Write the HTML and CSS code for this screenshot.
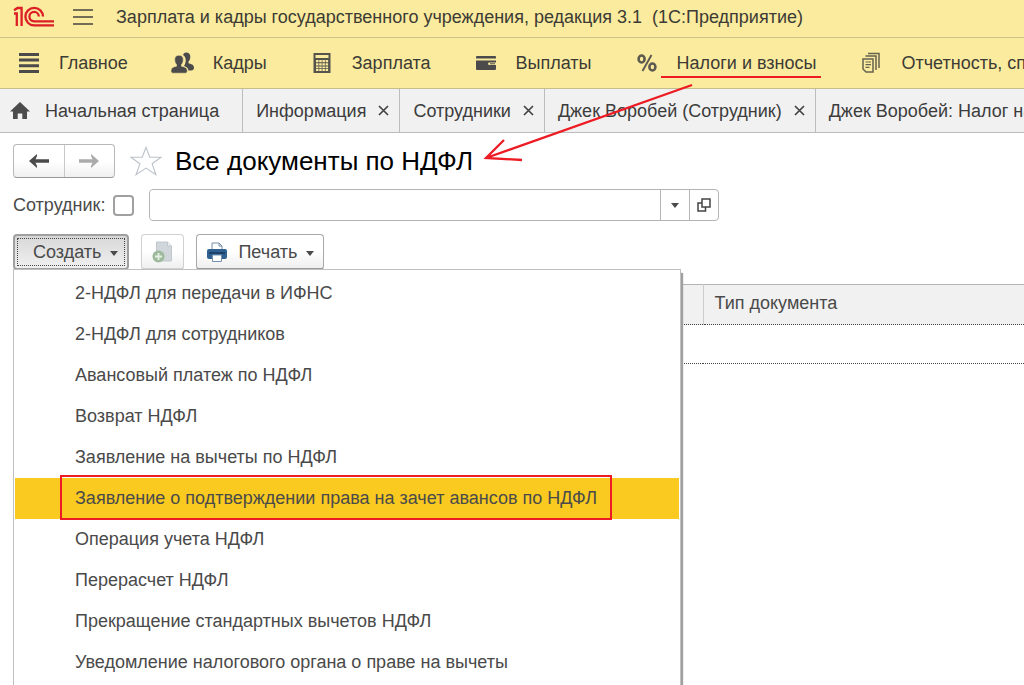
FILE: index.html
```html
<!DOCTYPE html>
<html lang="ru">
<head>
  <meta charset="UTF-8">
  <meta name="viewport" content="width=device-width, initial-scale=1.0">
  <title>Все документы по НДФЛ</title>
  <link rel="stylesheet" href="styles.css">
</head>
<body>
  <header class="titlebar">
    <svg class="logo" width="42" height="22" viewBox="0 0 42 22" fill="none" stroke="#dc1f26" stroke-width="2.300">
      <path d="M1 7.500h2.800V20M1 4.300L4.500 2H8.600v18"/>
      <path d="M30 10.500A8.800 8.800 0 1 0 21 19.400H41"/>
      <path d="M25.800 10.500A4.700 4.700 0 1 0 21 15.300H41"/>
    </svg>
    <button class="burger" aria-label="Меню">
      <svg width="20" height="16" viewBox="0 0 20 16" stroke="#45443c" stroke-width="1.500"><path d="M0 1h20M0 8h20M0 15h20"/></svg>
    </button>
    <span class="app-name">Зарплата и кадры государственного учреждения, редакция 3.1&nbsp; (1С:Предприятие)</span>
  </header>

  <nav class="sections">
    <a href="#">
      <svg width="20" height="20" viewBox="0 0 20 20" fill="#4b4b4b"><path d="M0 0h20v3H0zM0 5.600h20v3H0zM0 11.300h20v3H0zM0 17h20v3H0z"/></svg>
      Главное
    </a>
    <a href="#">
      <svg class="wide" width="24" height="22" viewBox="0 0 24 22" fill="#4b4b4b">
        <path d="M15 0.500c3 0 4.500 1.800 4.300 4.800-.1 1.800-.8 3.200-1.800 4.200v1.800c3.500.8 5.500 2 5.500 4.200 0 2-1 3-3 3h-2.500c-.5-2.500-2-3.700-4.500-4.500 1.300-2 1.900-4.200 1.700-6.500-.2-2-1.200-3.500-2.700-4.400.6-1.600 1.500-2.600 3-2.600z"/>
        <path d="M8 3.200c3 0 4.500 1.900 4.300 4.700-.1 2-.8 3.600-1.800 4.600v1.700c3.500.8 5.800 1.500 5.800 4.500 0 1.500-.5 2.500-2 2.500H2c-1.500 0-2-1-2-2.500 0-3 2-3.700 5.500-4.500v-1.700c-1-1-1.700-2.600-1.800-4.600C3.500 5.100 5 3.200 8 3.200z" stroke="#fbeb9e" stroke-width=".6"/>
      </svg>
      Кадры
    </a>
    <a href="#">
      <svg width="20" height="22" viewBox="0 0 20 22">
        <path fill="#55534d" d="M1.500 1h17v20h-17z"/>
        <path fill="#fbeb9e" d="M3.500 3h13v3h-13zM4 8h2.500v2.300H4zM7.200 8h2.500v2.300H7.200zM10.400 8h2.500v2.300h-2.500zM13.600 8h2.500v2.300h-2.500zM4 11.200h2.500v2.300H4zM7.200 11.200h2.500v2.300H7.200zM10.400 11.200h2.500v2.300h-2.500zM13.600 11.200h2.500v2.300h-2.500zM4 14.400h2.500v1.800H4zM7.200 14.400h2.500v1.800H7.200zM10.400 14.400h2.500v1.800h-2.500zM13.600 14.400h2.500v1.800h-2.500zM4 17h2.500v2H4zM7.200 17h2.500v2H7.200zM10.400 17h2.500v2h-2.500zM13.600 17h2.500v2h-2.500z"/>
      </svg>
      Зарплата
    </a>
    <a href="#">
      <svg width="20" height="16" viewBox="0 0 20 16" fill="#4b4b4b">
        <path d="M1 1h18q1 0 1 1v1.500H0V2q0-1 1-1z"/>
        <path d="M0 5.500h20v2h-6.500q-1.500 0-1.500 1.200 0 1.300 1.500 1.300H20v4q0 1-1 1H1q-1 0-1-1z"/>
        <path d="M14 8.300h5v1h-5z"/>
      </svg>
      Выплаты
    </a>
    <a href="#">
      <svg width="20" height="18" viewBox="0 0 20 18" fill="none" stroke="#5d5b50" stroke-width="2.600">
        <ellipse cx="4.600" cy="5" rx="3" ry="3.500"/><ellipse cx="15.400" cy="13" rx="3" ry="3.500"/><path d="M14.500 1L5.500 17" stroke-width="2"/>
      </svg>
      <span class="marked">Налоги и взносы</span>
    </a>
    <a href="#">
      <svg width="20" height="22" viewBox="0 0 20 22" fill="none" stroke="#66634f" stroke-width="1.500">
        <path d="M2 7h10v13H5l-3-3zM4.500 4H15v14M7 1.500h11V16"/>
        <path d="M4.500 10h5.500M4.500 12.700h5.500M4.500 15.300h4" stroke-width="1.200"/>
      </svg>
      Отчетность, справки
    </a>
  </nav>

  <nav class="tabs">
    <a class="tab home" href="#">
      <svg width="20" height="18" viewBox="0 0 20 18" fill="#4b4b4b"><path d="M10 0l10 9.500h-3V17h-4.700v-5.500H7.700V17H3V9.500H0z"/></svg>
      Начальная страница
    </a>
    <div class="tab"><a href="#">Информация</a><button class="close" aria-label="Закрыть"><svg width="11" height="11" viewBox="0 0 11 11" stroke="#444" stroke-width="1.700"><path d="M1 1l9 9M10 1l-9 9"/></svg></button></div>
    <div class="tab"><a href="#">Сотрудники</a><button class="close" aria-label="Закрыть"><svg width="11" height="11" viewBox="0 0 11 11" stroke="#444" stroke-width="1.700"><path d="M1 1l9 9M10 1l-9 9"/></svg></button></div>
    <div class="tab"><a href="#">Джек Воробей (Сотрудник)</a><button class="close" aria-label="Закрыть"><svg width="11" height="11" viewBox="0 0 11 11" stroke="#444" stroke-width="1.700"><path d="M1 1l9 9M10 1l-9 9"/></svg></button></div>
    <div class="tab"><a href="#">Джек Воробей: Налог на доходы</a></div>
  </nav>

  <main class="page">
    <div class="heading">
      <div class="history">
        <button aria-label="Назад"><svg width="20" height="14" viewBox="0 0 20 14" fill="#4b4b4b"><path d="M0 7l8-7v2L6.500 5.300H20v3.400H6.500L8 12v2z"/></svg></button>
        <button aria-label="Вперед" disabled><svg width="20" height="14" viewBox="0 0 20 14" fill="#ababab"><path d="M20 7l-8-7v2l1.500 3.300H0v3.400h13.500L12 12v2z"/></svg></button>
      </div>
      <button class="star" aria-label="В избранное">
        <svg width="32" height="32" viewBox="0 0 34 32" fill="#fff" stroke="#bcc1c9" stroke-width="1.200"><path d="M17 1.500l4 10.500h12l-9.500 7 4 11.500L17 23.500 6.500 30.500l4-11.500L1 12h12z"/></svg>
      </button>
      <h1>Все документы по НДФЛ</h1>
    </div>

    <div class="filter">
      <label for="use-employee">Сотрудник:</label>
      <input type="checkbox" id="use-employee">
      <div class="field">
        <input type="text" aria-label="Сотрудник">
        <button aria-label="Выбрать из списка"><span class="caret"></span></button>
        <button aria-label="Открыть"><svg width="14" height="14" viewBox="0 0 14 14" fill="none" stroke="#444" stroke-width="1.500"><path d="M5 1h8v8H5zM5 5H1v8h7.500V9"/></svg></button>
      </div>
    </div>

    <div class="toolbar">
      <div class="dropdown">
        <button class="btn create">Создать<span class="caret"></span></button>
        <ul class="menu">
          <li><a href="#">2-НДФЛ для передачи в ИФНС</a></li>
          <li><a href="#">2-НДФЛ для сотрудников</a></li>
          <li><a href="#">Авансовый платеж по НДФЛ</a></li>
          <li><a href="#">Возврат НДФЛ</a></li>
          <li><a href="#">Заявление на вычеты по НДФЛ</a></li>
          <li class="selected"><a href="#"><span class="framed">Заявление о подтверждении права на зачет авансов по НДФЛ</span></a></li>
          <li><a href="#">Операция учета НДФЛ</a></li>
          <li><a href="#">Перерасчет НДФЛ</a></li>
          <li><a href="#">Прекращение стандартных вычетов НДФЛ</a></li>
          <li><a href="#">Уведомление налогового органа о праве на вычеты</a></li>
        </ul>
      </div>
      <button class="btn copy" aria-label="Скопировать" disabled>
        <svg width="22" height="22" viewBox="0 0 22 22">
          <path d="M4.500 1h11l4 4v15h-15z" fill="#d0d6da" stroke="#c0c8cd"/><path d="M15.500 1v4h4" fill="#eef1f2" stroke="#c0c8cd"/>
          <circle cx="6.500" cy="15.500" r="6" fill="#9dbb9c"/><path d="M6.500 12v7M3 15.500h7" stroke="#e6f0e5" stroke-width="1.800"/>
        </svg>
      </button>
      <button class="btn print">
        <svg width="20" height="20" viewBox="0 0 20 20">
          <path d="M5 9V1h7l3 3v5" fill="#fff" stroke="#7590aa"/><path d="M12 1v3h3" fill="none" stroke="#7590aa"/>
          <rect x="0" y="7" width="20" height="10" rx="2" fill="#2f608f"/><path d="M2 11h16" stroke="#16395e" stroke-width="1.500"/>
          <path d="M5.500 13h9v6.500h-9z" fill="#fff" stroke="#7590aa"/>
        </svg>
        Печать<span class="caret"></span>
      </button>
    </div>

    <table class="list">
      <thead>
        <tr><th class="first"></th><th>Тип документа</th></tr>
      </thead>
      <tbody>
        <tr><td></td><td></td></tr>
      </tbody>
    </table>
  </main>

  <svg class="arrow" width="212" height="84" viewBox="0 0 212 84" fill="none" stroke="#ed1c24" stroke-width="2.300">
    <path d="M210 4L4 77M22 59L4 77L40 79"/>
  </svg>
</body>
</html>
```

FILE: styles.css
```css
* {
  box-sizing: border-box;
}
html {
  overflow: hidden;
}
body {
  margin: 0;
  min-height: 100vh;
  position: relative;
  overflow: hidden;
  background: #fff;
  color: #4a4a4a;
  font-family: "Liberation Sans", Arial, sans-serif;
  font-size: 18px;
  line-height: 22px;
}
a {
  color: inherit;
  text-decoration: none;
}
button, input {
  font: inherit;
  color: inherit;
  margin: 0;
}
button {
  padding: 0;
  border: none;
  background: none;
}
svg {
  flex: none;
}

.titlebar {
  display: flex;
  align-items: center;
  height: 38px;
  padding: 0 13px 3px;
  background: #fbeb9e;
  border-bottom: 1px solid #cdc288;
  color: #3c3b35;
  white-space: nowrap;
}
.burger {
  display: flex;
  margin: 0 23px 0 18px;
}

.sections {
  display: flex;
  gap: 45px;
  height: 51px;
  padding-left: 19px;
  overflow: hidden;
  background: #fbeb9e;
  border-bottom: 1px solid #c6bd8e;
  color: #3c3b35;
  white-space: nowrap;
}
.sections a {
  display: flex;
  flex: none;
  align-items: center;
  gap: 20px;
}
.sections .wide {
  margin: 0 -2px;
}
.marked {
  position: relative;
}
.marked::after {
  content: "";
  position: absolute;
  left: -16px;
  right: -5px;
  bottom: -4px;
  height: 2px;
  background: #ed1c24;
}

.tabs {
  display: flex;
  height: 44px;
  overflow: hidden;
  background: #f1f1f1;
  border-bottom: 1px solid #bcbcbc;
  color: #3c3c3c;
  white-space: nowrap;
}
.tab {
  display: flex;
  flex: none;
  align-items: center;
  gap: 12px;
  padding: 0 10px 0 13px;
  border-left: 1px solid #bcbcbc;
}
.tab.home {
  gap: 15px;
  padding: 0 23px 0 10px;
  border-left: none;
}
.close {
  display: flex;
}

.page {
  padding: 11px 0 0 13px;
}
.heading {
  display: flex;
  align-items: center;
}
.history {
  display: flex;
  width: 102px;
  height: 34px;
  border: 1px solid #b8b8b8;
  border-bottom-color: #999;
  border-radius: 4px;
  background: linear-gradient(#fff 50%, #f0f0f0);
}
.history button {
  display: flex;
  flex: 1;
  align-items: center;
  justify-content: center;
}
.history button + button {
  border-left: 1px solid #c8c8c8;
}
.star {
  display: flex;
  margin: 0 13px 0 15px;
}
h1 {
  margin: 0;
  color: #000;
  font-size: 26px;
  font-weight: normal;
  line-height: 34px;
}

.filter {
  display: flex;
  align-items: center;
  margin-top: 11px;
}
.filter input[type="checkbox"] {
  appearance: none;
  width: 21px;
  height: 21px;
  margin: 0 15px 0 8px;
  border: 2px solid #a0a0a0;
  border-radius: 4px;
  background: #fff;
}
.field {
  display: flex;
  width: 57%;
  max-width: 570px;
  height: 32px;
  border: 1px solid #b4b4b4;
  border-radius: 4px;
}
.field input {
  flex: 1;
  min-width: 0;
  padding: 0 8px;
  border: none;
  border-radius: 4px;
  outline: none;
}
.field button {
  display: flex;
  align-items: center;
  justify-content: center;
  width: 29px;
  border-left: 1px solid #b4b4b4;
}
.caret {
  border: 4px solid transparent;
  border-top: 5px solid #4a4a4a;
  border-bottom: none;
}

.toolbar {
  display: flex;
  gap: 12px;
  margin-top: 13px;
}
.btn {
  display: flex;
  align-items: center;
  height: 36px;
  border: 1px solid #a8a8a8;
  border-bottom: 2px solid #999;
  border-radius: 4px;
  background: linear-gradient(#fff 50%, #efefef);
}
.btn .caret {
  margin: 3px 0 0 9px;
}
.dropdown {
  position: relative;
}
.create {
  position: relative;
  padding: 0 9px 0 18px;
  border: 2px solid #a0a0a0;
  background: linear-gradient(#d8d8d8, #f0f0f0);
}
.create::after {
  content: "";
  position: absolute;
  inset: 2px;
  border: 1px dotted #444;
}
.copy {
  justify-content: center;
  width: 43px;
  border-color: #d0d0d0;
}
.print {
  padding: 0 9px 0 10px;
}
.print svg {
  margin-right: 11px;
}

.menu {
  position: absolute;
  z-index: 1;
  top: 35px;
  left: 0;
  width: 668px;
  margin: 0;
  padding: 3px 1px 20px;
  list-style: none;
  background: #fff;
  border: 1px solid #c0c0c0;
  box-shadow: 2px 4px 1px #a0a0a0;
}
.menu a {
  display: block;
  padding: 9px 0 10px 60px;
}
.selected {
  background: #faca20;
}
.framed {
  position: relative;
}
.framed::after {
  content: "";
  position: absolute;
  inset: -13px -15px -12px;
  border: 2px solid #ed1c24;
}

.list {
  width: 100%;
  margin-top: 14px;
  border-collapse: collapse;
  table-layout: fixed;
}
.list th {
  height: 40px;
  padding: 0 11px 4px;
  background: #f1f1f1;
  border-top: 1px solid #b4b4b4;
  border-bottom: 1px dotted #444;
  font-weight: normal;
  text-align: left;
}
.list .first {
  width: 690px;
  border-right: 1px solid #ccc;
}
.list td {
  height: 39px;
  border-bottom: 1px dotted #444;
}

.arrow {
  position: absolute;
  top: 81px;
  left: 482px;
  z-index: 2;
  pointer-events: none;
}
```
